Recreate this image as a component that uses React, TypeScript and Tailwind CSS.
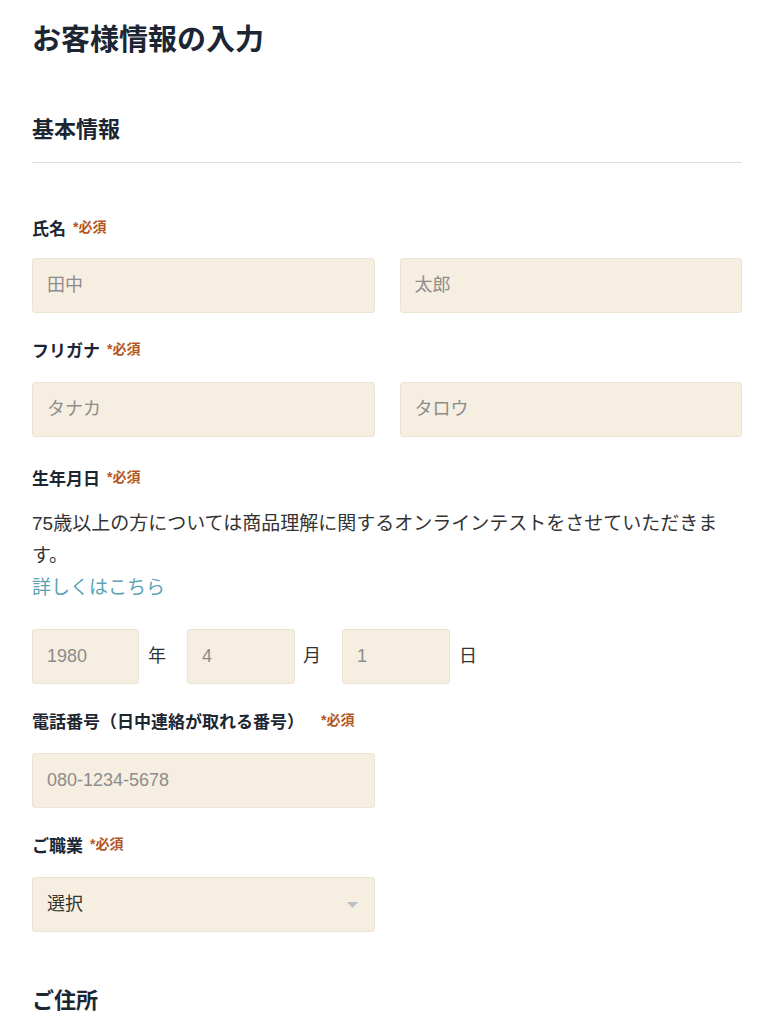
const FONT = "font-['Liberation_Sans','Noto_Sans_CJK_JP',sans-serif]";

function Required({ className = "ml-[7px]" }: { className?: string }) {
  return (
    <span className={"align-top text-[14px] leading-[18px] font-bold text-[#b4561f] " + className}>*必須</span>
  );
}

function FieldLabel({ children, gap }: { children: React.ReactNode; gap?: string }) {
  return (
    <div className="text-[17px] leading-[24px] font-bold text-[#1c2633]">
      {children}
      <Required className={gap} />
    </div>
  );
}

function TextBox({ placeholder, className = "" }: { placeholder: string; className?: string }) {
  return (
    <div
      className={
        "h-[55px] flex items-center px-[14px] rounded-[3px] border border-[#ece3d2] bg-[#f6eee1] text-[18px] text-[#8c8c8c] " +
        className
      }
    >
      {placeholder}
    </div>
  );
}

export default function App() {
  return (
    <div className={`${FONT} bg-white min-h-[1024px] pl-[32px] pr-[34px] w-[776px] overflow-hidden`}>
      <h1 className="pt-[20px] text-[29px] leading-[40px] font-bold text-[#1c2633]">お客様情報の入力</h1>

      <h2 className="mt-[54px] pb-[16px] border-b border-[#d7e2e2] text-[22px] leading-[32px] font-bold text-[#1c2633]">
        基本情報
      </h2>

      <div className="mt-[55px]">
        <FieldLabel>氏名</FieldLabel>
        <div className="mt-[16px] grid grid-cols-2 gap-[25px]">
          <TextBox placeholder="田中" />
          <TextBox placeholder="太郎" />
        </div>
      </div>

      <div className="mt-[27px]">
        <FieldLabel>フリガナ</FieldLabel>
        <div className="mt-[18px] grid grid-cols-2 gap-[25px]">
          <TextBox placeholder="タナカ" />
          <TextBox placeholder="タロウ" />
        </div>
      </div>

      <div className="mt-[31px]">
        <FieldLabel>生年月日</FieldLabel>
        <p className="mt-[16px] text-[19px] leading-[32px] text-[#333]">
          75歳以上の方については商品理解に関するオンラインテストをさせていただきます。
        </p>
        <a className="block text-[19px] leading-[32px] text-[#5aa3b6]">詳しくはこちら</a>
        <div className="mt-[25px] flex items-center">
          <TextBox placeholder="1980" className="w-[107px]" />
          <span className="ml-[9px] mr-[21px] text-[18px] text-[#333]">年</span>
          <TextBox placeholder="4" className="w-[108px]" />
          <span className="ml-[8px] mr-[21px] text-[18px] text-[#333]">月</span>
          <TextBox placeholder="1" className="w-[108px]" />
          <span className="ml-[9px] text-[18px] text-[#333]">日</span>
        </div>
      </div>

      <div className="mt-[27px]">
        <FieldLabel gap="ml-[17px]">電話番号（日中連絡が取れる番号）</FieldLabel>
        <div className="mt-[18px] grid grid-cols-2 gap-[25px]">
          <TextBox placeholder="080-1234-5678" />
        </div>
      </div>

      <div className="mt-[27px]">
        <FieldLabel>ご職業</FieldLabel>
        <div className="mt-[18px] grid grid-cols-2 gap-[25px]">
          <div className="h-[55px] flex items-center justify-between px-[14px] rounded-[3px] border border-[#ece3d2] bg-[#f6eee1] text-[18px] text-[#333]">
            <span>選択</span>
            <svg width="11" height="6" viewBox="0 0 11 6" className="mr-[2px]">
              <path d="M0 0h11L5.5 6z" fill="#b9c0c7" />
            </svg>
          </div>
        </div>
      </div>

      <h2 className="mt-[53px] text-[22px] leading-[32px] font-bold text-[#1c2633]">ご住所</h2>
    </div>
  );
}
